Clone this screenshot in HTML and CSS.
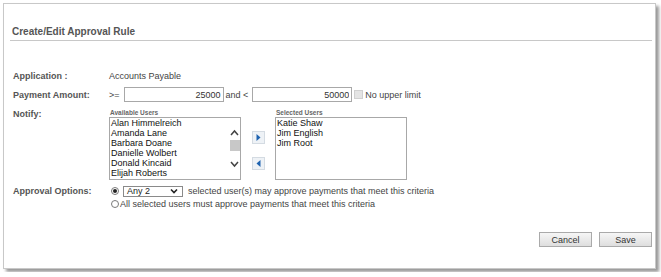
FILE: index.html
```html
<!DOCTYPE html>
<html lang="en">
<head>
  <meta charset="UTF-8">
  <meta name="viewport" content="width=device-width, initial-scale=1.0">
  <title>Create/Edit Approval Rule</title>
  <link rel="stylesheet" href="styles.css">
</head>
<body>
  <div class="panel">
    <h1 class="title">Create/Edit Approval Rule</h1>

    <div class="form">
      <div class="row row-app">
        <span class="label">Application :</span>
        <span class="value">Accounts Payable</span>
      </div>

      <div class="row row-amount">
        <span class="label">Payment Amount:</span>
        <div class="value amount">
          <span>&gt;=</span>
          <input class="num" type="text" value="25000">
          <span>and &lt;</span>
          <input class="num" type="text" value="50000">
          <span class="check"></span>
          <span class="muted">No upper limit</span>
        </div>
      </div>

      <div class="row row-notify">
        <span class="label">Notify:</span>
        <div class="value users">
          <div class="userlist">
            <div class="caption">Available Users</div>
            <div class="listbox">
              <ul class="items">
                <li>Alan Himmelreich</li>
                <li>Amanda Lane</li>
                <li>Barbara Doane</li>
                <li>Danielle Wolbert</li>
                <li>Donald Kincaid</li>
                <li>Elijah Roberts</li>
              </ul>
              <div class="scroll">
                <svg class="chev" width="9" height="8" viewBox="0 0 9 8"><path d="M1 6 L4.5 2 L8 6" fill="none" stroke="#444" stroke-width="1.5"/></svg>
                <div class="thumb"></div>
                <svg class="chev down" width="9" height="8" viewBox="0 0 9 8"><path d="M1 2 L4.5 6 L8 2" fill="none" stroke="#444" stroke-width="1.5"/></svg>
              </div>
            </div>
          </div>

          <div class="movers">
            <button class="mover" type="button">
              <svg width="5" height="7" viewBox="0 0 5 7"><path d="M0.5 0 L4.5 3.5 L0.5 7 Z" fill="#1f63b0"/></svg>
            </button>
            <button class="mover" type="button">
              <svg width="5" height="7" viewBox="0 0 5 7"><path d="M4.5 0 L0.5 3.5 L4.5 7 Z" fill="#1f63b0"/></svg>
            </button>
          </div>

          <div class="userlist">
            <div class="caption">Selected Users</div>
            <div class="listbox">
              <ul class="items">
                <li>Katie Shaw</li>
                <li>Jim English</li>
                <li>Jim Root</li>
              </ul>
            </div>
          </div>
        </div>
      </div>

      <div class="row row-options">
        <span class="label">Approval Options:</span>
        <div class="value options">
          <div class="option">
            <span class="radio checked"></span>
            <span class="select">
              <span>Any 2</span>
              <svg width="8" height="6" viewBox="0 0 8 6"><path d="M1 1.5 L4 4.5 L7 1.5" fill="none" stroke="#222" stroke-width="1.6"/></svg>
            </span>
            <span class="text">selected user(s) may approve payments that meet this criteria</span>
          </div>
          <div class="option second">
            <span class="radio"></span>
            <span class="text tight">All selected users must approve payments that meet this criteria</span>
          </div>
        </div>
      </div>
    </div>

    <div class="actions">
      <button class="btn" type="button">Cancel</button>
      <button class="btn" type="button">Save</button>
    </div>
  </div>
</body>
</html>
```

FILE: styles.css
```css
body {
  margin: 0;
  padding: 3px;
  background: #fff;
  font-family: "Liberation Sans", Arial, sans-serif;
  color: #444;
}

.panel {
  width: 653px;
  height: 266px;
  box-sizing: border-box;
  border: 1px solid #c8c8c8;
  box-shadow: 3px 3px 3px rgba(0, 0, 0, 0.4);
  display: flex;
  flex-direction: column;
}

.title {
  margin: 0 3px 0 6px;
  padding: 22px 0 2px 2px;
  font-size: 10px;
  line-height: 12px;
  font-weight: bold;
  color: #555;
  border-bottom: 1px solid #c8c8c8;
}

.form { padding: 29px 0 0 9px; }

.row { display: flex; }
.label {
  width: 96px;
  flex: none;
  font-size: 9px;
  line-height: 12px;
  font-weight: bold;
  color: #555;
}
.value { font-size: 9px; line-height: 12px; color: #444; }

.row-amount { margin-top: 5px; align-items: center; height: 15px; }
.amount { display: flex; align-items: center; }
.num {
  width: 100px;
  height: 15px;
  box-sizing: border-box;
  margin: 0 3px 0 4px;
  padding: 0 2px;
  border: 1px solid #a8a8a8;
  font-family: inherit;
  font-size: 9px;
  color: #333;
  text-align: right;
  outline: none;
}
.num + span { margin-left: -1px; }
.check {
  width: 9px;
  height: 9px;
  box-sizing: border-box;
  margin: 0 2px 0 5px;
  background: #e4e4e4;
  border: 1px solid #d0d0d0;
}

.row-notify { margin-top: 6px; }
.users { display: flex; }
.caption {
  height: 9px;
  font-size: 6.5px;
  line-height: 9px;
  font-weight: bold;
  color: #666;
  padding-left: 1px;
}
.listbox {
  width: 132px;
  height: 63px;
  box-sizing: border-box;
  border: 1px solid #a8a8a8;
  display: flex;
}
.items {
  flex: 1;
  margin: 0;
  padding: 0 0 0 1px;
  list-style: none;
  font-size: 9px;
  line-height: 10px;
  color: #111;
}
.scroll {
  width: 11px;
  padding-top: 11px;
  display: flex;
  flex-direction: column;
  align-items: center;
}
.chev { display: block; }
.thumb { width: 10px; height: 11px; margin: 3px 0 9px; background: #c8c8c8; }

.movers {
  display: flex;
  flex-direction: column;
  gap: 13px;
  padding-top: 23px;
  margin: 0 10px 0 11px;
}
.mover {
  width: 13px;
  height: 13px;
  padding: 0;
  border: 1px solid #d4dbe2;
  background: #eef2f6;
  display: flex;
  align-items: center;
  justify-content: center;
}

.row-options { margin-top: 5px; }
.option { display: flex; align-items: center; height: 12px; padding-left: 2px; }
.option.second { margin-top: 1px; }
.radio {
  width: 8px;
  height: 8px;
  box-sizing: border-box;
  border: 1px solid #7a7a7a;
  border-radius: 50%;
  background: #fff;
  display: flex;
  align-items: center;
  justify-content: center;
}
.radio.checked::after {
  content: "";
  width: 4px;
  height: 4px;
  border-radius: 50%;
  background: #222;
}
.select {
  width: 60px;
  height: 11px;
  box-sizing: border-box;
  margin-left: 4px;
  padding: 0 4px 0 3px;
  border: 1px solid #8a8a8a;
  display: flex;
  align-items: center;
  justify-content: space-between;
  color: #222;
  line-height: 9px;
}
.text { margin-left: 5px; color: #444; }
.text.tight { margin-left: 1px; }

.actions {
  display: flex;
  justify-content: flex-end;
  gap: 7px;
  margin-top: 22px;
  padding-right: 3px;
}
.btn {
  width: 53px;
  height: 15px;
  padding: 0;
  border: 1px solid #aaa;
  background: linear-gradient(#f6f6f6, #dedede);
  font-family: inherit;
  font-size: 9px;
  color: #333;
}
```
